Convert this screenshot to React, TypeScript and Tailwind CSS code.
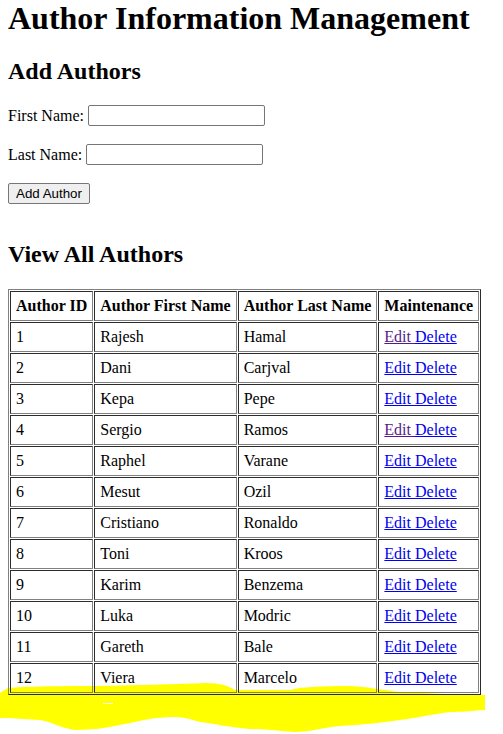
import React from "react";

const authors: [number, string, string][] = [
  [1, "Rajesh", "Hamal"],
  [2, "Dani", "Carjval"],
  [3, "Kepa", "Pepe"],
  [4, "Sergio", "Ramos"],
  [5, "Raphel", "Varane"],
  [6, "Mesut", "Ozil"],
  [7, "Cristiano", "Ronaldo"],
  [8, "Toni", "Kroos"],
  [9, "Karim", "Benzema"],
  [10, "Luka", "Modric"],
  [11, "Gareth", "Bale"],
  [12, "Viera", "Marcelo"],
];

const visitedEdit = new Set([1, 4]);

const cell =
  "border border-[gray] [border-style:inset] p-[5px] leading-[18px] text-left align-middle";

export default function App() {
  return (
    <div
      className="relative min-h-[734px] w-full overflow-hidden bg-white px-2 text-[16px] text-black"
      style={{ fontFamily: '"Liberation Serif", "Times New Roman", serif' }}
    >
      <svg
        className="pointer-events-none absolute left-0 top-0 z-0"
        width="503"
        height="734"
        viewBox="0 0 503 734"
      >
        <path
          fill="#ffff00"
          d="M0,693 L8,688 C30,686 80,686 100,686 C140,685 180,684 205,683 C222,683 228,686 235,690 L290,690 C300,687 320,686 350,686 C370,687 380,690 400,692 C430,693 460,695 485,695 L485,710 C470,711 460,712 450,712 C430,715 420,717 400,720 C380,723 360,725 340,726 C320,728 310,732 295,732 C280,731 265,729 250,729 C235,728 215,724 200,722 C190,719 185,717 170,717 C150,718 140,721 125,724 C110,727 95,730 75,730 C60,728 50,721 40,720 C25,719 10,718 0,718 Z"
        />
        <rect x="103" y="703" width="10" height="1" fill="#ffffff" />
      </svg>

      <div className="relative z-10">
        <h1 className="m-0 text-[32px] font-bold leading-[37px]">
          Author Information Management
        </h1>
        <h2 className="mt-[20px] text-[24px] font-bold leading-[28px]">
          Add Authors
        </h2>

        <div className="mt-[19px] flex h-[23px] items-center">
          <span className="leading-[18px]">First Name:</span>
          <input
            type="text"
            className="ml-[4px] h-[21px] w-[177px] rounded-[2px] border border-[#767676] bg-white px-[2px] text-[13.33px]"
            style={{ fontFamily: '"Liberation Sans", Arial, sans-serif' }}
          />
        </div>

        <div className="mt-[16px] flex h-[23px] items-center">
          <span className="leading-[18px]">Last Name:</span>
          <input
            type="text"
            className="ml-[4px] h-[21px] w-[177px] rounded-[2px] border border-[#767676] bg-white px-[2px] text-[13.33px]"
            style={{ fontFamily: '"Liberation Sans", Arial, sans-serif' }}
          />
        </div>

        <div className="mt-[16px] flex h-[23px] items-center">
          <button
            type="button"
            className="h-[21px] rounded-[2px] border border-[#767676] bg-[#efefef] px-[7px] text-[13.33px] leading-[15px] text-black"
            style={{ fontFamily: '"Liberation Sans", Arial, sans-serif' }}
          >
            Add Author
          </button>
        </div>

        <h2 className="mt-[35px] text-[24px] font-bold leading-[28px]">
          View All Authors
        </h2>

        <table className="mt-[21px] border-separate border-spacing-[1px] border border-[gray] [border-style:outset]">
          <thead>
            <tr>
              <th className={`${cell} font-bold`}>Author ID</th>
              <th className={`${cell} font-bold`}>Author First Name</th>
              <th className={`${cell} font-bold`}>Author Last Name</th>
              <th className={`${cell} font-bold`}>Maintenance</th>
            </tr>
          </thead>
          <tbody>
            {authors.map(([id, first, last]) => (
              <tr key={id}>
                <td className={cell}>{id}</td>
                <td className={cell}>{first}</td>
                <td className={cell}>{last}</td>
                <td className={cell}>
                  <a
                    href="#"
                    className={
                      visitedEdit.has(id)
                        ? "text-[#551a8b] underline"
                        : "text-[#0000ee] underline"
                    }
                  >
                    Edit{" "}
                  </a>
                  <a href="#" className="text-[#0000ee] underline">
                    Delete
                  </a>
                </td>
              </tr>
            ))}
          </tbody>
        </table>
      </div>
    </div>
  );
}
